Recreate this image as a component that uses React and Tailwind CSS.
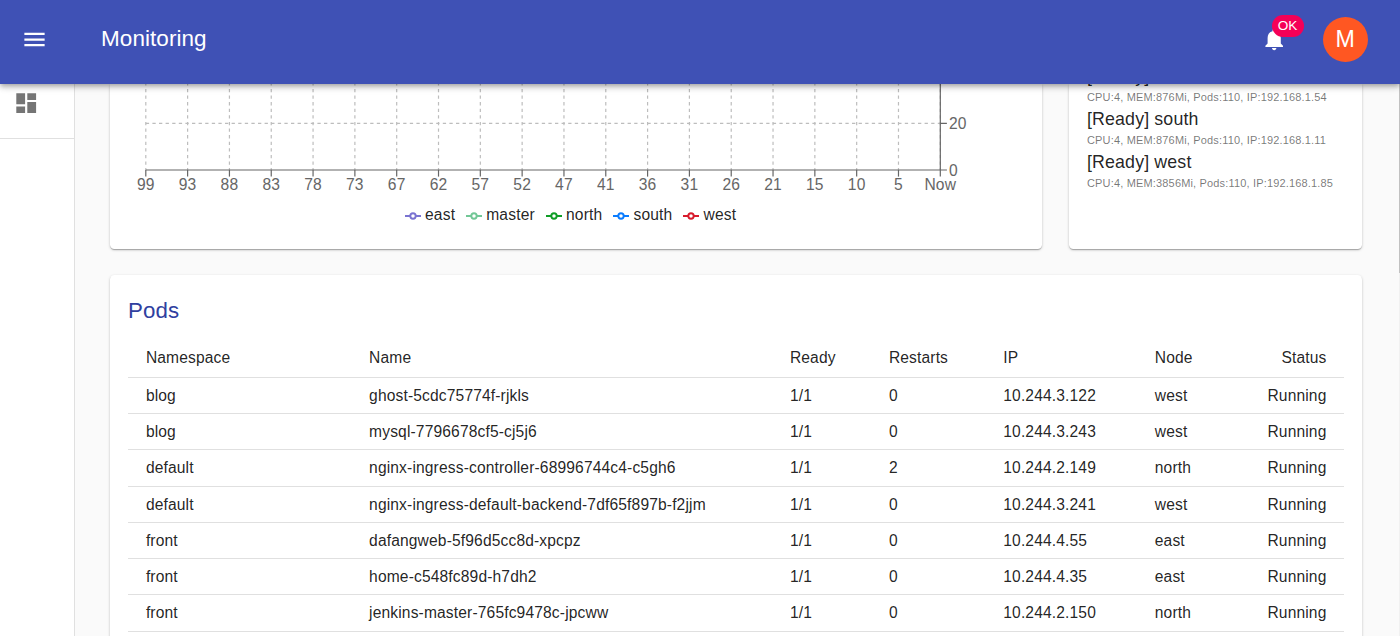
const TICKS = ["99", "93", "88", "83", "78", "73", "67", "62", "57", "52", "47", "41", "36", "31", "26", "21", "15", "10", "5", "Now"];

const SERIES = [
  { name: "east", color: "#7a73d1" },
  { name: "master", color: "#72c796" },
  { name: "north", color: "#0f9d26" },
  { name: "south", color: "#0a7cff" },
  { name: "west", color: "#d81b2c" },
];

const NODES = [
  { name: "north", info: "CPU:4, MEM:876Mi, Pods:110, IP:192.168.1.54" },
  { name: "south", info: "CPU:4, MEM:876Mi, Pods:110, IP:192.168.1.11" },
  { name: "west", info: "CPU:4, MEM:3856Mi, Pods:110, IP:192.168.1.85" },
];

const PODS = [
  ["blog", "ghost-5cdc75774f-rjkls", "1/1", "0", "10.244.3.122", "west", "Running"],
  ["blog", "mysql-7796678cf5-cj5j6", "1/1", "0", "10.244.3.243", "west", "Running"],
  ["default", "nginx-ingress-controller-68996744c4-c5gh6", "1/1", "2", "10.244.2.149", "north", "Running"],
  ["default", "nginx-ingress-default-backend-7df65f897b-f2jjm", "1/1", "0", "10.244.3.241", "west", "Running"],
  ["front", "dafangweb-5f96d5cc8d-xpcpz", "1/1", "0", "10.244.4.55", "east", "Running"],
  ["front", "home-c548fc89d-h7dh2", "1/1", "0", "10.244.4.35", "east", "Running"],
  ["front", "jenkins-master-765fc9478c-jpcww", "1/1", "0", "10.244.2.150", "north", "Running"],
];

const CARD = "bg-white shadow-[0_1px_3px_rgba(0,0,0,0.2),0_1px_1px_rgba(0,0,0,0.14),0_2px_1px_-1px_rgba(0,0,0,0.12)]";
const ROW = "grid grid-cols-[223.2px_420.8px_99px_114.4px_151.5px_90px_1fr] border-b border-[#e0e0e0] pl-[17.9px] pr-[17.5px]";

function Icon({ d, className }) {
  return (
    <svg viewBox="0 0 24 24" fill="currentColor" className={className}>
      <path d={d} />
    </svg>
  );
}

function Header() {
  return (
    <header className="relative z-10 flex h-[84px] shrink-0 items-center bg-[#3f51b5] pb-[6px] pl-[21px] pr-[32.5px] text-white shadow-[0_2px_4px_-1px_rgba(0,0,0,0.2),0_4px_5px_rgba(0,0,0,0.14),0_1px_10px_rgba(0,0,0,0.12)]">
      <Icon className="size-[27px]" d="M3 18h18v-2H3v2zm0-5h18v-2H3v2zm0-7v2h18V6H3z" />
      <h1 className="ml-[53px] flex-1 pt-px text-[22.5px] leading-none tracking-[0.06px]">Monitoring</h1>
      <div className="relative mr-[35.5px]">
        <Icon
          className="size-[26.4px]"
          d="M12 22c1.1 0 2-.9 2-2h-4c0 1.1.89 2 2 2zm6-6v-5c0-3.07-1.64-5.64-4.5-6.32V4c0-.83-.67-1.5-1.5-1.5s-1.5.67-1.5 1.5v.68C7.63 5.36 6 7.92 6 11v5l-2 2v1h16v-1l-2-2z"
        />
        <span className="absolute -top-[11px] left-[10.4px] flex h-[22px] w-8 items-center justify-center rounded-full bg-[#f50057] text-[13.6px]">
          OK
        </span>
      </div>
      <div className="grid h-[45px] w-[44.5px] place-items-center rounded-full bg-[#ff5722] pt-px text-[23.2px] leading-none">M</div>
    </header>
  );
}

/* Lower part of the usage chart: origin is the card's top left corner. */
function Chart() {
  const left = 35.8;
  const right = 830.3;
  const step = (right - left) / (TICKS.length - 1);
  const base = 86;
  return (
    <svg width="932" height="116" className="block text-[15.6px]" fill="none">
      <g stroke="#bdbdbd" strokeWidth="1.2" strokeDasharray="3.3 3.3">
        {TICKS.map((t, i) => (
          <line key={t} x1={left + i * step} x2={left + i * step} y1="-1.7" y2={base} />
        ))}
        <line x1={left} x2={right} y1="39.4" y2="39.4" />
      </g>
      <g stroke="#666" strokeWidth="1.2">
        <path d={`M${left} ${base}H${right + 6.6}M${right} 0V${base}M${right} 39.4h6.6`} />
        {TICKS.map((t, i) => (
          <line key={t} x1={left + i * step} x2={left + i * step} y1={base} y2={base + 6.6} />
        ))}
      </g>
      <g fill="#666" letterSpacing="0.16">
        {TICKS.map((t, i) => (
          <text key={t} x={left + i * step} y="105.8" textAnchor="middle">{t}</text>
        ))}
        <text x="839" y="45">20</text>
        <text x="839" y="91.5">0</text>
      </g>
    </svg>
  );
}

function Legend() {
  return (
    <ul className="flex gap-[11px] pl-[295px] pt-[4px] text-[15.6px] leading-[22px] tracking-[0.18px] text-black/87">
      {SERIES.map((s) => (
        <li key={s.name} className="flex items-center gap-1">
          <svg width="16" height="16" viewBox="0 0 16 16" fill="none" stroke={s.color} strokeWidth="1.9" className="mt-0.5">
            <path d="M0 8h5.3M10.7 8H16" />
            <circle cx="8" cy="8" r="2.7" />
          </svg>
          {s.name}
        </li>
      ))}
    </ul>
  );
}

function NodeList() {
  return (
    <div className={`${CARD} h-[165px] w-[293px] overflow-hidden rounded-b-[4.4px] pl-[18px]`}>
      <div className="-mt-[21px]">
        {NODES.map((n) => (
          <div key={n.name} className="h-[43px]">
            <p className="text-[17.8px] leading-[26px] tracking-[0.14px] text-black/87">[Ready] {n.name}</p>
            <p className="whitespace-nowrap text-[11px] leading-[17px] tracking-[0.165px] text-black/54">{n.info}</p>
          </div>
        ))}
      </div>
    </div>
  );
}

function Pods() {
  return (
    <section className={`${CARD} mt-[26px] h-[400px] w-[1252px] rounded-t-[4.4px] px-[18px] pt-[18px] text-black/87`}>
      <h2 className="text-[22.3px] leading-[35px] tracking-[0.1px] text-[#303f9f]">Pods</h2>
      <div className="text-[15.6px] tracking-[0.14px]">
        <div className={`${ROW} h-[49.9px] pt-[7.5px] leading-[44px]`}>
          {["Namespace", "Name", "Ready", "Restarts", "IP", "Node", "Status"].map((h) => (
            <span key={h} className="h-0 last:text-right">{h}</span>
          ))}
        </div>
        {PODS.map((pod) => (
          <div key={pod[1]} className={`${ROW} h-[36.25px] leading-[36px]`}>
            {pod.map((v, i) => (
              <span key={i} className="h-0 whitespace-nowrap last:text-right">{v}</span>
            ))}
          </div>
        ))}
      </div>
    </section>
  );
}

export default function App() {
  return (
    <div className="flex h-[636px] w-[1400px] flex-col overflow-hidden bg-[#fafafa] font-['Liberation_Sans',Arial,sans-serif]">
      <Header />
      <div className="flex min-h-0 flex-1">
        <aside className="w-[75px] shrink-0 border-r border-[#e0e0e0] bg-white">
          <div className="h-[55px] border-b border-[#e0e0e0] pl-[12.7px] pt-[5.7px] text-[#757575]">
            <Icon className="size-[26.4px]" d="M3 13h8V3H3v10zm0 8h8v-6H3v6zm10 0h8V11h-8v10zm0-18v6h8V3h-8z" />
          </div>
        </aside>
        <main className="min-w-0 flex-1 pl-[35px]">
          <div className="flex gap-[27px]">
            <div className={`${CARD} h-[165px] w-[932px] rounded-b-[4.4px]`}>
              <Chart />
              <Legend />
            </div>
            <NodeList />
          </div>
          <Pods />
        </main>
        {/* scrollbar edge */}
        <div className="w-px bg-[#f1f1f1]">
          <div className="h-[189px] bg-[#c1c1c1]" />
        </div>
      </div>
    </div>
  );
}
